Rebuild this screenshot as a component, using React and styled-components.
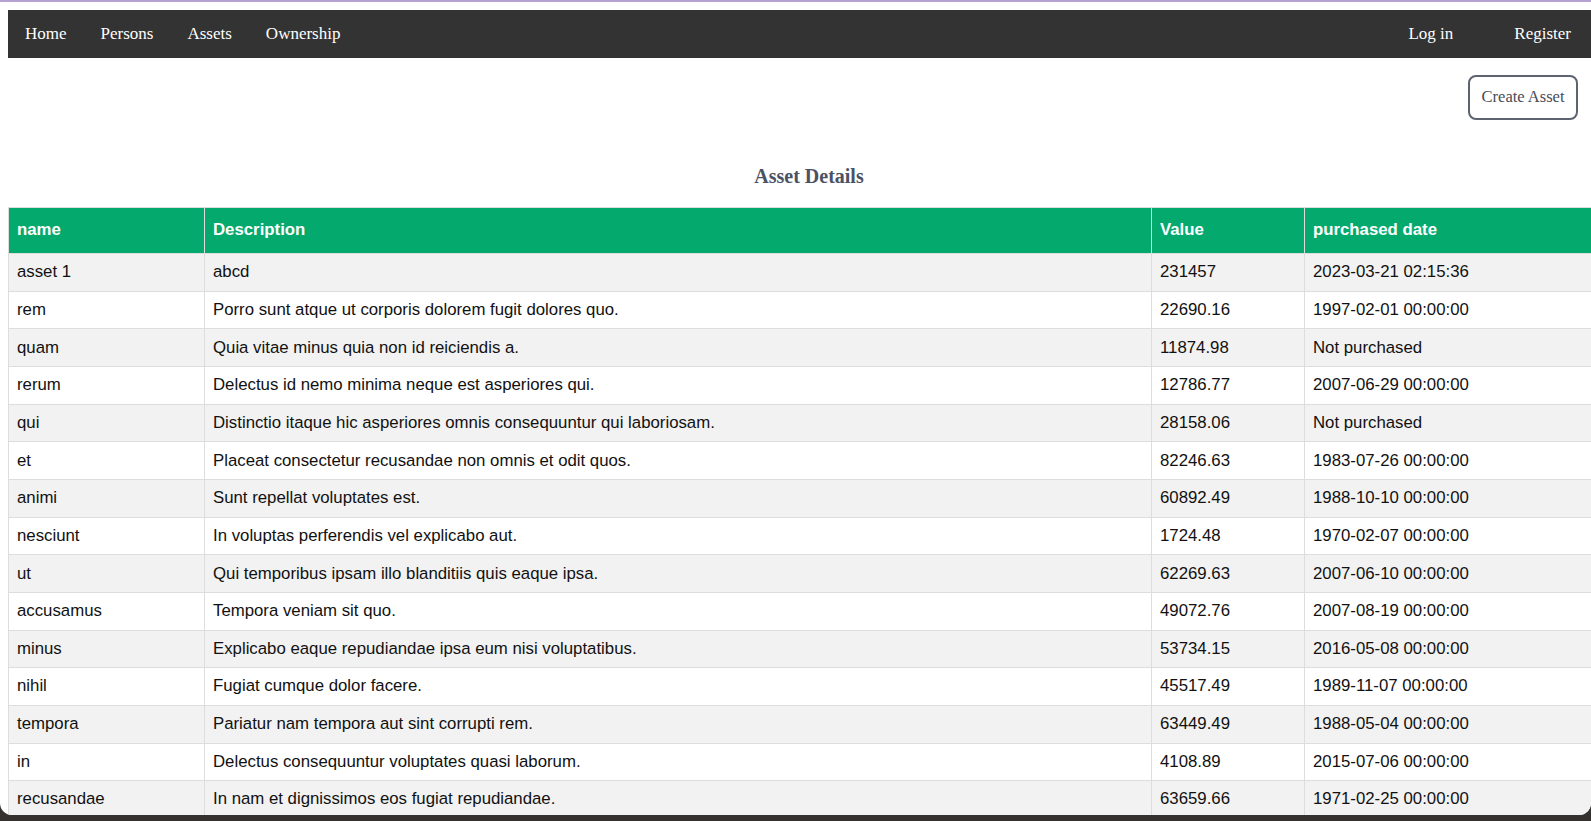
import React from "react";
import styled, { createGlobalStyle } from "styled-components";

const GlobalStyle = createGlobalStyle`
  html, body {
    margin: 0;
    padding: 0;
    background: #34312e;
    overflow: hidden;
  }
`;

const Window = styled.div`
  box-sizing: border-box;
  height: 815px;
  background: #ffffff;
  border-top: 2px solid #b5a2d1;
  border-radius: 0 0 12px 12px;
  overflow: hidden;
  padding: 8px 0 0 8px;
  font-family: "Liberation Serif", "Times New Roman", serif;
`;

const Nav = styled.nav`
  display: flex;
  justify-content: space-between;
  background: #333333;
  padding-right: 3px;
`;

const NavGroup = styled.div`
  display: flex;
  gap: ${(p) => p.$gap || 0}px;
`;

const NavLink = styled.a`
  display: block;
  padding: 14px 17px;
  font-size: 17px;
  line-height: 20px;
  color: #ffffff;
  text-decoration: none;
  cursor: pointer;
`;

const Content = styled.div`
  width: 1602px;
`;

const Toolbar = styled.div`
  display: flex;
  justify-content: flex-end;
  padding: 17px 32px 0 0;
`;

const Button = styled.button`
  font-family: "Liberation Serif", "Times New Roman", serif;
  font-size: 16.5px;
  line-height: 20px;
  color: #474b55;
  background: #ffffff;
  border: 2px solid #5d6370;
  border-radius: 8px;
  padding: 10px 11.5px 10.5px;
  cursor: pointer;
`;

const Heading = styled.h3`
  margin: 45.5px 0 19px;
  text-align: center;
  font-size: 20px;
  line-height: 23px;
  font-weight: bold;
  color: #4b5264;
`;

const Table = styled.table`
  width: 100%;
  border-collapse: collapse;
  table-layout: fixed;
  font-family: "Liberation Sans", Arial, Helvetica, sans-serif;
  font-size: 16.8px;
`;

const Th = styled.th`
  border: 1px solid #dddddd;
  padding: 12.3px 8px 12.1px;
  line-height: 20.67px;
  text-align: left;
  background: #04aa6d;
  color: #ffffff;
  font-weight: bold;
`;

const Row = styled.tr`
  background: ${(p) => (p.$even ? "#f2f2f2" : "#ffffff")};
`;

const Td = styled.td`
  border: 1px solid #dddddd;
  padding: 8.2px 8px 7.8px;
  line-height: 20.67px;
  color: #111111;
  white-space: nowrap;
  overflow: hidden;
`;

const assets = [
  ["asset 1", "abcd", "231457", "2023-03-21 02:15:36"],
  ["rem", "Porro sunt atque ut corporis dolorem fugit dolores quo.", "22690.16", "1997-02-01 00:00:00"],
  ["quam", "Quia vitae minus quia non id reiciendis a.", "11874.98", "Not purchased"],
  ["rerum", "Delectus id nemo minima neque est asperiores qui.", "12786.77", "2007-06-29 00:00:00"],
  ["qui", "Distinctio itaque hic asperiores omnis consequuntur qui laboriosam.", "28158.06", "Not purchased"],
  ["et", "Placeat consectetur recusandae non omnis et odit quos.", "82246.63", "1983-07-26 00:00:00"],
  ["animi", "Sunt repellat voluptates est.", "60892.49", "1988-10-10 00:00:00"],
  ["nesciunt", "In voluptas perferendis vel explicabo aut.", "1724.48", "1970-02-07 00:00:00"],
  ["ut", "Qui temporibus ipsam illo blanditiis quis eaque ipsa.", "62269.63", "2007-06-10 00:00:00"],
  ["accusamus", "Tempora veniam sit quo.", "49072.76", "2007-08-19 00:00:00"],
  ["minus", "Explicabo eaque repudiandae ipsa eum nisi voluptatibus.", "53734.15", "2016-05-08 00:00:00"],
  ["nihil", "Fugiat cumque dolor facere.", "45517.49", "1989-11-07 00:00:00"],
  ["tempora", "Pariatur nam tempora aut sint corrupti rem.", "63449.49", "1988-05-04 00:00:00"],
  ["in", "Delectus consequuntur voluptates quasi laborum.", "4108.89", "2015-07-06 00:00:00"],
  ["recusandae", "In nam et dignissimos eos fugiat repudiandae.", "63659.66", "1971-02-25 00:00:00"],
];

export default function App() {
  return (
    <>
      <GlobalStyle />
      <Window>
        <Nav>
          <NavGroup>
            <NavLink>Home</NavLink>
            <NavLink>Persons</NavLink>
            <NavLink>Assets</NavLink>
            <NavLink>Ownership</NavLink>
          </NavGroup>
          <NavGroup $gap={27}>
            <NavLink>Log in</NavLink>
            <NavLink>Register</NavLink>
          </NavGroup>
        </Nav>
        <Content>
          <Toolbar>
            <Button>Create Asset</Button>
          </Toolbar>
          <Heading>Asset Details</Heading>
          <Table>
            <colgroup>
              <col style={{ width: 196 }} />
              <col style={{ width: 947 }} />
              <col style={{ width: 153 }} />
              <col style={{ width: 306 }} />
            </colgroup>
            <thead>
              <tr>
                <Th>name</Th>
                <Th>Description</Th>
                <Th>Value</Th>
                <Th>purchased date</Th>
              </tr>
            </thead>
            <tbody>
              {assets.map((a, i) => (
                <Row key={i} $even={i % 2 === 0}>
                  <Td>{a[0]}</Td>
                  <Td>{a[1]}</Td>
                  <Td>{a[2]}</Td>
                  <Td>{a[3]}</Td>
                </Row>
              ))}
            </tbody>
          </Table>
        </Content>
      </Window>
    </>
  );
}
